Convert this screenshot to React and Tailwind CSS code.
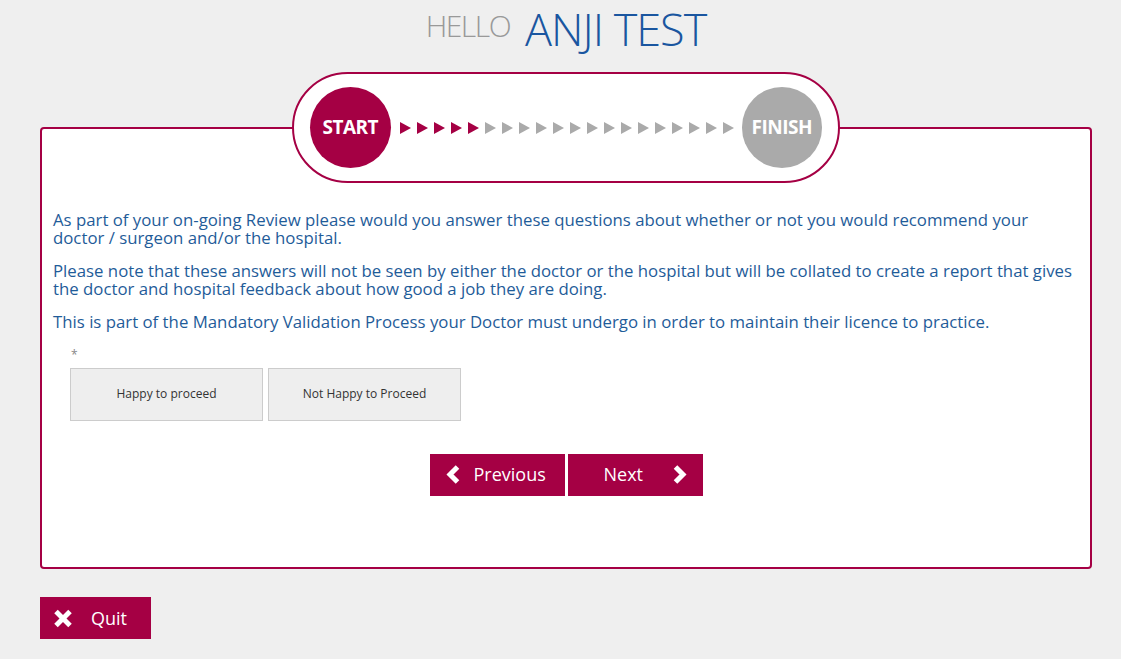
import React from "react";

const font = { fontFamily: '"Open Sans", "Liberation Sans", sans-serif' };

function Arrows() {
  const items = [];
  for (let i = 0; i < 20; i++) {
    items.push(
      <svg key={i} width="11" height="12" viewBox="0 0 11 12" className="shrink-0">
        <polygon points="0,0 11,6 0,12" fill={i < 5 ? "#a50044" : "#aaaaaa"} />
      </svg>
    );
  }
  return <div className="flex items-center gap-[6px]">{items}</div>;
}

function ChevronLeft() {
  return (
    <svg width="16" height="19" viewBox="0 0 16 19" className="shrink-0">
      <polyline points="12.5,2 5,9.5 12.5,17" fill="none" stroke="white" strokeWidth="5" strokeLinejoin="miter" strokeLinecap="butt" />
    </svg>
  );
}

function ChevronRight() {
  return (
    <svg width="16" height="19" viewBox="0 0 16 19" className="shrink-0">
      <polyline points="3.5,2 11,9.5 3.5,17" fill="none" stroke="white" strokeWidth="5" strokeLinejoin="miter" strokeLinecap="butt" />
    </svg>
  );
}

function XIcon() {
  return (
    <svg width="20" height="19" viewBox="0 0 20 19" className="shrink-0">
      <line x1="3" y1="2.5" x2="17" y2="16.5" stroke="white" strokeWidth="5" strokeLinecap="butt" />
      <line x1="17" y1="2.5" x2="3" y2="16.5" stroke="white" strokeWidth="5" strokeLinecap="butt" />
    </svg>
  );
}

export default function App() {
  return (
    <div className="min-h-[659px] w-full bg-[#efefef]" style={font}>
      <div className="ml-[40px] w-[1052px]">
        <div className="flex justify-center items-start gap-[15px] pt-[4px] h-[72px]">
          <span className="text-[30px] font-light text-[#999999] leading-[44px] tracking-[-1.5px]">HELLO</span>
          <span className="text-[45px] font-light text-[#1a56a0] leading-[58px] tracking-[-1px] -mt-[4px]">ANJI TEST</span>
        </div>
        <div className="relative mt-[55px] h-[442px] rounded-[4px] border-2 border-[#a50044] bg-white">
          <div className="absolute left-1/2 -translate-x-1/2 -top-[57px] h-[111px] w-[548px] rounded-full border-2 border-[#a50044] bg-white flex items-center px-[16px]">
            <div className="w-[81px] h-[81px] rounded-full bg-[#a50044] flex items-center justify-center text-white font-bold text-[19px] tracking-[-0.5px]">START</div>
            <div className="ml-[9px] mr-[8px]"><Arrows /></div>
            <div className="w-[81px] h-[81px] rounded-full bg-[#aaaaaa] flex items-center justify-center text-white font-bold text-[19px] tracking-[-0.5px]">FINISH</div>
          </div>
          <div className="pt-[82px] pl-[11px] pr-[14px] text-[16.8px] leading-[17.5px] text-[#1f5c99]">
            <p>As part of your on-going Review please would you answer these questions about whether or not you would recommend your doctor / surgeon and/or the hospital.</p>
            <p className="mt-[16px]">Please note that these answers will not be seen by either the doctor or the hospital but will be collated to create a report that gives the doctor and hospital feedback about how good a job they are doing.</p>
            <p className="mt-[16px]">This is part of the Mandatory Validation Process your Doctor must undergo in order to maintain their licence to practice.</p>
          </div>
          <div className="pl-[29px] mt-[16px] text-[12px] text-[#888888] leading-[16px]">*</div>
          <div className="pl-[28px] mt-[5px] flex gap-[5px]">
            <button className="w-[193px] h-[53px] bg-[#eeeeee] border border-[#cccccc] text-[12px] text-[#333333]">Happy to proceed</button>
            <button className="w-[193px] h-[53px] bg-[#eeeeee] border border-[#cccccc] text-[12px] text-[#333333]">Not Happy to Proceed</button>
          </div>
          <div className="mt-[33px] flex justify-center gap-[3px]">
            <button className="w-[135px] h-[42px] bg-[#a50044] text-white text-[18px] flex items-center pl-[15px]">
              <ChevronLeft />
              <span className="ml-[13px]">Previous</span>
            </button>
            <button className="w-[135px] h-[42px] bg-[#a50044] text-white text-[18px] flex items-center pl-[36px]">
              <span>Next</span>
              <span className="ml-[29px]"><ChevronRight /></span>
            </button>
          </div>
        </div>
        <div className="mt-[28px]">
          <button className="w-[111px] h-[42px] bg-[#a50044] text-white text-[18px] flex items-center pl-[13px]">
            <XIcon />
            <span className="ml-[18px]">Quit</span>
          </button>
        </div>
      </div>
    </div>
  );
}
